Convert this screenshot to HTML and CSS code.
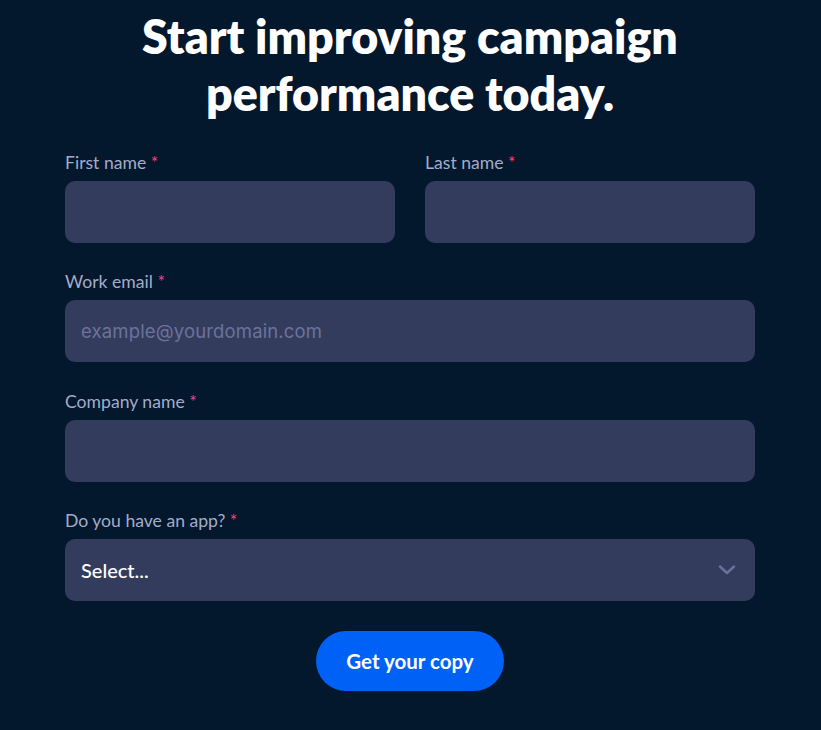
FILE: index.html
```html
<!DOCTYPE html>
<html lang="en">
<head>
<meta charset="utf-8">
<title>Get your copy</title>
<link rel="stylesheet" href="styles.css">
</head>
<body>
<main class="page">
  <h1 class="title">Start improving campaign<br>performance today.</h1>
  <form class="form">
    <div class="row two">
      <div class="field">
        <label class="label">First name <span class="req">*</span></label>
        <div class="input"></div>
      </div>
      <div class="field">
        <label class="label">Last name <span class="req">*</span></label>
        <div class="input"></div>
      </div>
    </div>
    <div class="field">
      <label class="label">Work email <span class="req">*</span></label>
      <div class="input"><span class="placeholder">example@yourdomain.com</span></div>
    </div>
    <div class="field">
      <label class="label">Company name <span class="req">*</span></label>
      <div class="input"></div>
    </div>
    <div class="field">
      <label class="label">Do you have an app? <span class="req">*</span></label>
      <div class="input select"><span class="value">Select...</span>
        <svg class="chev" width="18" height="10" viewBox="0 0 18 10"><path d="M2 1.5 L9 8 L16 1.5" fill="none" stroke="#69729a" stroke-width="2.4" stroke-linecap="round" stroke-linejoin="round"/></svg>
      </div>
    </div>
    <div class="actions">
      <button type="button" class="btn">Get your copy</button>
    </div>
  </form>
</main>
</body>
</html>
```
FILE: styles.css
```css
html, body {
  margin: 0;
  padding: 0;
  background: #03172d;
}
body {
  font-family: "Lato", "Noto Sans", sans-serif;
  color: #fff;
}
.page {
  width: 690px;
  margin-left: 65px;
  padding-top: 8px;
}
.title {
  margin: 0;
  text-align: center;
  font-size: 46.5px;
  line-height: 57px;
  font-weight: 800;
}
.form {
  margin-top: 31px;
  display: flex;
  flex-direction: column;
  gap: 29.4px;
}
.row.two {
  display: grid;
  grid-template-columns: 1fr 1fr;
  column-gap: 30px;
}
.field {
  display: flex;
  flex-direction: column;
  gap: 8px;
}
.label {
  font-size: 17.6px;
  line-height: 20px;
  color: #a3acc9;
}
.req {
  color: #ff3d7f;
}
.input {
  height: 62px;
  background: #343c5e;
  border-radius: 10px;
  display: flex;
  align-items: center;
  padding: 0 16px;
  box-sizing: border-box;
}
.placeholder {
  font-family: "Inter", sans-serif;
  font-size: 18.5px;
  letter-spacing: 0.15px;
  color: #6a739c;
}
.select {
  justify-content: space-between;
  padding-right: 19px;
}
.value {
  font-size: 20px;
  color: #fff;
  font-weight: 500;
}
.actions {
  display: flex;
  justify-content: center;
}
.btn {
  width: 188px;
  height: 60px;
  border: none;
  border-radius: 30px;
  background: #0061f6;
  color: #fff;
  font-family: "Lato", sans-serif;
  font-weight: 700;
  font-size: 20.5px;
}
```
